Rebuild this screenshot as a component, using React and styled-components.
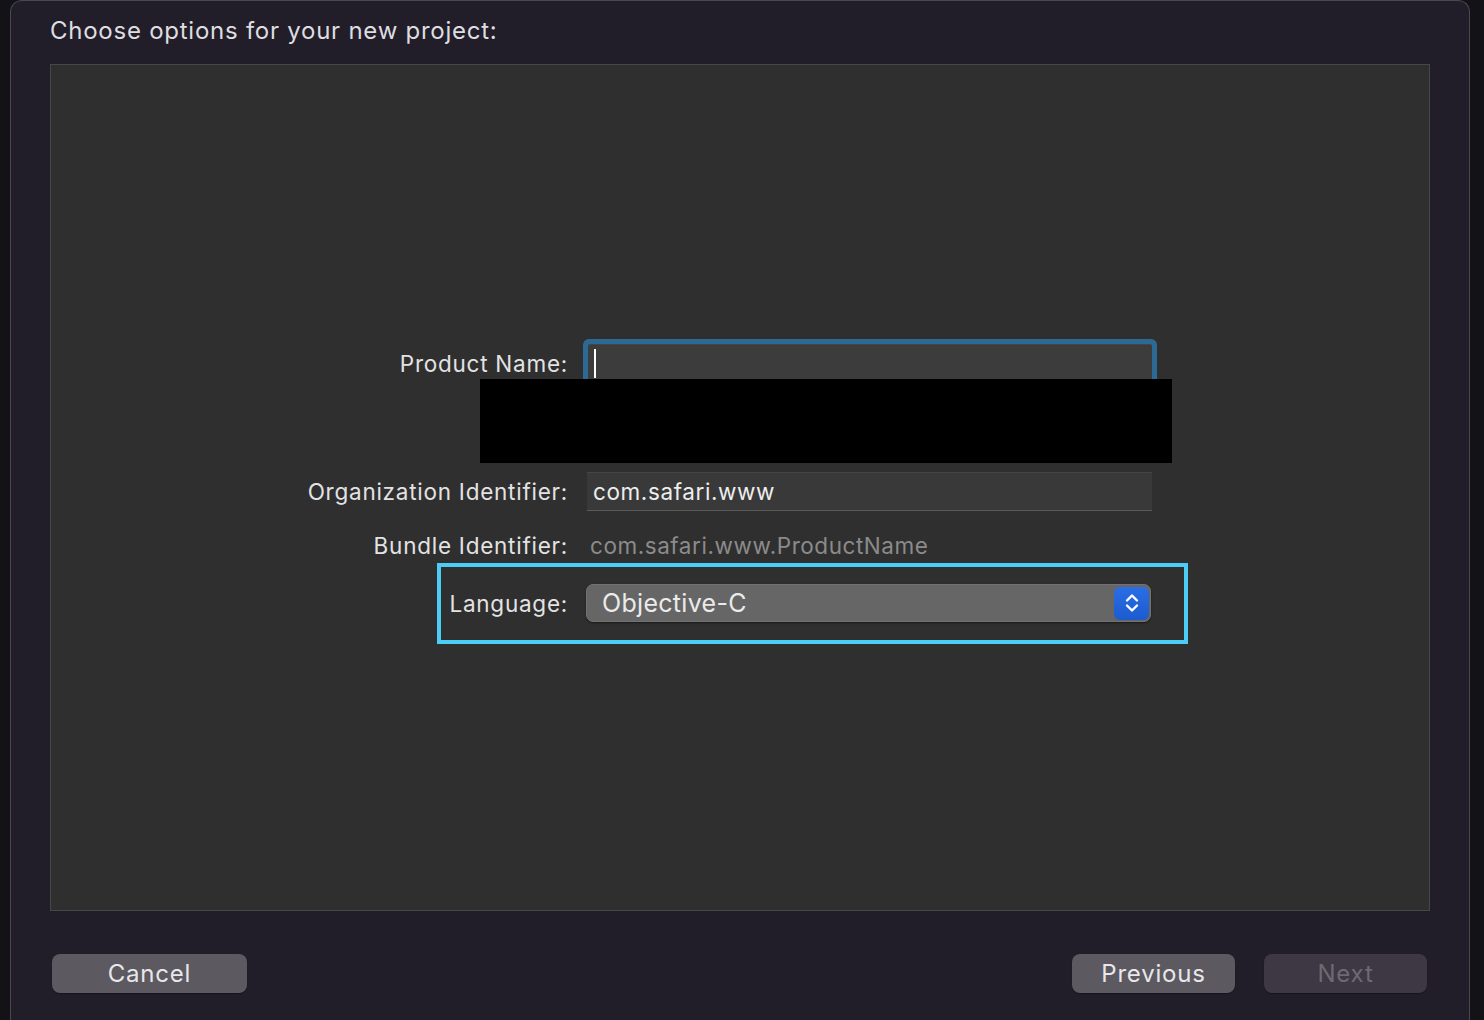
import React from "react";
import styled, { createGlobalStyle } from "styled-components";

const GlobalStyle = createGlobalStyle`
  html, body {
    margin: 0;
    padding: 0;
    background: #131216;
    font-family: "Inter", "Liberation Sans", sans-serif;
    -webkit-font-smoothing: antialiased;
  }
  #root {
    width: 1484px;
    height: 1020px;
    overflow: hidden;
  }
`;

const Screen = styled.div`
  width: 1484px;
  height: 1020px;
  display: flex;
  padding-left: 10px;
  box-sizing: border-box;
  background: #131216;
`;

const Window = styled.div`
  width: 1460px;
  height: 1040px;
  box-sizing: border-box;
  background: #221e29;
  border: 1px solid #4a4751;
  border-bottom: none;
  border-radius: 12px 12px 0 0;
  padding: 14px 39px 0 39px;
  display: flex;
  flex-direction: column;
`;

const Title = styled.h1`
  margin: 0;
  font-size: 24px;
  font-weight: 400;
  line-height: 32px;
  color: #dedde0;
  letter-spacing: 0.75px;
`;

const Panel = styled.div`
  margin-top: 17px;
  width: 1380px;
  height: 847px;
  box-sizing: border-box;
  background: #2f2f2f;
  border: 1px solid #474747;
  padding-top: 279px;
  display: flex;
  flex-direction: column;
`;

const Row = styled.div`
  display: grid;
  grid-template-columns: ${(p) => p.$labelWidth || 516}px 565px;
  column-gap: ${(p) => p.$gap || 20}px;
  align-items: center;
  height: ${(p) => p.$height}px;
  margin-top: ${(p) => p.$top || 0}px;
`;

const Label = styled.label`
  text-align: right;
  font-size: 22.5px;
  letter-spacing: 0.75px;
  margin-right: -1px;
  color: #e3e3e3;
  white-space: nowrap;
`;

const Field = styled.div`
  height: 39px;
  box-sizing: border-box;
  background: ${(p) => (p.$focused ? "#3c3c3c" : "#393939")};
  border-top: 1px solid #454545;
  border-bottom: 1px solid #5a5a5a;
  box-shadow: ${(p) => (p.$focused ? "0 0 0 5px #2c6a95" : "none")};
  border-radius: ${(p) => (p.$focused ? "2px" : "0")};
  margin-left: ${(p) => (p.$focused ? "1px" : "0")};
  display: flex;
  align-items: center;
  padding-left: 6px;
  font-size: 22.5px;
  letter-spacing: 0.6px;
  color: #ededed;
`;

const Caret = styled.span`
  width: 2px;
  height: 29px;
  background: #ffffff;
`;

const Redacted = styled.div`
  position: relative;
  z-index: 1;
  margin: -4px 0 0 429px;
  width: 692px;
  height: 84px;
  background: #000;
`;

const Value = styled.span`
  font-size: 22.5px;
  letter-spacing: 0.55px;
  color: #8b8b8b;
  padding-left: 3px;
`;

const Highlight = styled.div`
  margin: 5px 0 0 386px;
  width: 751px;
  height: 81px;
  box-sizing: border-box;
  border: 4px solid #4ccdf6;
  padding-top: 17px;
`;

const Popup = styled.div`
  height: 38px;
  box-sizing: border-box;
  background: #666666;
  border: 1px solid #727272;
  border-radius: 7px;
  box-shadow: 0 1px 2px rgba(0, 0, 0, 0.45);
  display: flex;
  align-items: center;
  justify-content: space-between;
  padding: 0 1px 0 15px;
  font-size: 25px;
  letter-spacing: 0.3px;
  color: #ebebeb;
`;

const Stepper = styled.span`
  width: 35px;
  height: 33px;
  border-radius: 6px;
  background: linear-gradient(#2a6ee6, #1d5bcf);
  display: flex;
  align-items: center;
  justify-content: center;
`;

const Footer = styled.div`
  margin-top: 43px;
  display: flex;
  align-items: center;
  padding: 0 3px 0 2px;
  gap: 29px;
`;

const Spacer = styled.div`
  flex: 1;
`;

const Button = styled.button`
  width: ${(p) => p.$width}px;
  height: 39px;
  border: none;
  border-radius: 8px;
  background: ${(p) => (p.$disabled ? "#3d3843" : "#5c5961")};
  color: ${(p) => (p.$disabled ? "#6e6a73" : "#e8e7ea")};
  font-family: inherit;
  font-size: 24px;
  letter-spacing: 0.8px;
  box-shadow: 0 1px 1px rgba(0, 0, 0, 0.35);
  padding: 0;
  line-height: 39px;
`;

export default function App() {
  return (
    <>
      <GlobalStyle />
      <Screen>
        <Window>
          <Title>Choose options for your new project:</Title>
          <Panel>
            <Row $height={39}>
              <Label>Product Name:</Label>
              <Field $focused>
                <Caret />
              </Field>
            </Row>
            <Redacted />
            <Row $height={39} $top={9}>
              <Label>Organization Identifier:</Label>
              <Field>com.safari.www</Field>
            </Row>
            <Row $height={26} $top={21}>
              <Label>Bundle Identifier:</Label>
              <Value>com.safari.www.ProductName</Value>
            </Row>
            <Highlight>
              <Row $height={38} $labelWidth={126} $gap={19}>
                <Label>Language:</Label>
                <Popup>
                  Objective-C
                  <Stepper>
                    <svg width="16" height="24" viewBox="0 0 16 24" fill="none" stroke="#fff" strokeWidth="2.4" strokeLinecap="round" strokeLinejoin="round">
                      <path d="M3 9.5 L8 4.5 L13 9.5" />
                      <path d="M3 14.5 L8 19.5 L13 14.5" />
                    </svg>
                  </Stepper>
                </Popup>
              </Row>
            </Highlight>
          </Panel>
          <Footer>
            <Button $width={195}>Cancel</Button>
            <Spacer />
            <Button $width={163}>Previous</Button>
            <Button $width={163} $disabled>
              Next
            </Button>
          </Footer>
        </Window>
      </Screen>
    </>
  );
}
